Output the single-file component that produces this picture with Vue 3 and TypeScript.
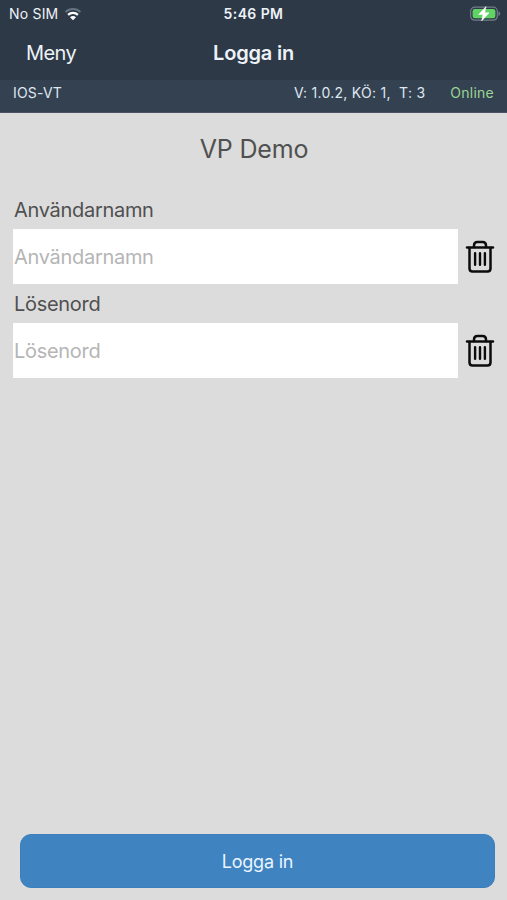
<script setup lang="ts">
import { reactive } from 'vue'

type FieldKey = 'user' | 'password'

interface Field {
  key: FieldKey
  label: string
  type: string
}

const fields: Field[] = [
  { key: 'user', label: 'Användarnamn', type: 'text' },
  { key: 'password', label: 'Lösenord', type: 'password' },
]

const values = reactive<Record<FieldKey, string>>({ user: '', password: '' })

function clearField(key: FieldKey): void {
  values[key] = ''
}
</script>

<template>
  <div class="screen">
    <header class="top">
      <div class="status">
        <div class="carrier">
          <span class="sim">No SIM</span>
          <svg class="wifi" width="18" height="14" viewBox="0 0 18 14" fill="none">
            <path d="M1.6 5.1C5.7 1.1 12.3 1.1 16.4 5.1" stroke="#667380" stroke-width="2" />
            <path d="M4.1 7.9C6.8 5.3 11.2 5.3 13.9 7.9" stroke="#fff" stroke-width="2.2" />
            <path d="M6 10.2C7.7 8.7 10.3 8.7 12 10.2L9 13.2Z" fill="#fff" />
          </svg>
        </div>
        <span class="clock">5:46 PM</span>
        <svg class="battery" width="31" height="16" viewBox="0 0 31 16">
          <rect x="0.7" y="1.2" width="26.6" height="13" rx="4" fill="#2d3946" stroke="#71808a" stroke-width="1.2" />
          <rect x="2.6" y="3.1" width="22.8" height="9.2" rx="2.2" fill="#61d265" />
          <path d="M28.5 5.3C30.7 6.3 30.7 9.1 28.5 10.1Z" fill="#71808a" />
          <path d="M16 0.5L8.7 8.5H13L11.6 15L19.1 6.8H14.8Z" fill="#fff" stroke="#fff" stroke-width="0.5" />
        </svg>
      </div>
      <nav class="nav">
        <span class="menu">Meny</span>
        <h1 class="title">Logga in</h1>
      </nav>
    </header>
    <div class="info">
      <span class="device">IOS-VT</span>
      <span class="version">V: 1.0.2, KÖ: 1,&nbsp; T: 3</span>
      <span class="online">Online</span>
    </div>
    <main class="content">
      <h2 class="heading">VP Demo</h2>
      <div v-for="field in fields" :key="field.key" class="field">
        <label class="label" :for="field.key">{{ field.label }}</label>
        <div class="row">
          <input
            :id="field.key"
            v-model="values[field.key]"
            class="input"
            :type="field.type"
            :placeholder="field.label"
          />
          <button class="clear" type="button" @click="clearField(field.key)">
            <svg width="30" height="34" viewBox="0 0 30 34" fill="none" stroke="#0c0c0c" stroke-linecap="round" stroke-linejoin="round">
              <path d="M2 7.500H28" stroke-width="2.400" />
              <path d="M9 7V5.500Q9 2 12.500 2H17.500Q21 2 21 5.500V7" stroke-width="2.500" />
              <path d="M4.500 8V28.500Q4.500 31.500 7.500 31.500H22.500Q25.500 31.500 25.500 28.500V8" stroke-width="2.500" />
              <path d="M10.100 13.300V24.800M15 13.300V24.800M19.900 13.300V24.800" stroke-width="2.400" />
            </svg>
          </button>
        </div>
      </div>
      <button class="submit" type="button">Logga in</button>
    </main>
  </div>
</template>

<style>
body {
  background: #dcdcdc;
}
</style>

<style scoped>
.screen {
  display: flex;
  flex-direction: column;
  height: 900px;
  overflow: hidden;
  background: #dcdcdc;
  font-family: Inter, 'Liberation Sans', sans-serif;
}

.top {
  height: 80px;
  background: #2d3946;
  color: #edf2f8;
}

.status {
  display: grid;
  grid-template-columns: 1fr auto 1fr;
  align-items: center;
  height: 27px;
  padding: 0 6px 0 9px;
  font-size: 14px;
  line-height: 27px;
}

.carrier {
  display: flex;
  align-items: center;
  gap: 6px;
}

.sim {
  letter-spacing: 0.2px;
}

.clock {
  margin-right: 3px;
  font-weight: 600;
  letter-spacing: 0.4px;
}

.battery {
  justify-self: end;
}

.nav {
  display: grid;
  grid-template-columns: 1fr auto 1fr;
  height: 52px;
  padding: 0 0 0 26px;
  margin-right: 26px;
  line-height: 52px;
}

.menu {
  font-size: 20px;
  letter-spacing: -0.6px;
}

.title {
  margin: 0;
  font-size: 20px;
  font-weight: 600;
  letter-spacing: -0.2px;
}

.info {
  display: flex;
  box-sizing: border-box;
  height: 33px;
  padding: 0 13px;
  background: #344150;
  color: #dfe7f0;
  font-size: 14px;
  line-height: 25px;
  border-bottom: 1px solid #4b5264;
}

.device {
  letter-spacing: 0.2px;
}

.version {
  margin-left: auto;
  margin-right: 25px;
  letter-spacing: 0.26px;
}

.online {
  color: #99d594;
  letter-spacing: 0.25px;
}

.content {
  display: flex;
  flex: 1;
  flex-direction: column;
  padding: 0 12px 12px;
  color: #505050;
}

.heading {
  margin: 0 0 9px;
  height: 72px;
  padding-left: 1px;
  font-size: 25px;
  font-weight: 400;
  letter-spacing: -0.2px;
  line-height: 72px;
  text-align: center;
}

.field {
  height: 94px;
}

.label {
  display: block;
  height: 35px;
  padding-left: 2px;
  font-size: 20px;
  letter-spacing: -0.3px;
  line-height: 32px;
}

.row {
  display: flex;
  align-items: center;
  gap: 7px;
}

.input {
  box-sizing: border-box;
  flex: 1;
  min-width: 0;
  height: 55px;
  margin-left: 1px;
  padding: 0 1px;
  border: 0;
  border-radius: 0;
  background: #fff;
  color: #505050;
  font-family: inherit;
  font-size: 20px;
  letter-spacing: -0.3px;
}

.input::placeholder {
  color: #b5b5b5;
  opacity: 1;
}

.clear {
  display: flex;
  padding: 0;
  border: 0;
  background: none;
}

.submit {
  height: 54px;
  margin: auto 0 0 8px;
  padding: 0;
  border: 1px solid #3c7fbd;
  border-radius: 11px;
  background: #3f83c0;
  color: #eaf5ff;
  font-family: inherit;
  font-size: 18px;
  letter-spacing: -0.2px;
}
</style>
